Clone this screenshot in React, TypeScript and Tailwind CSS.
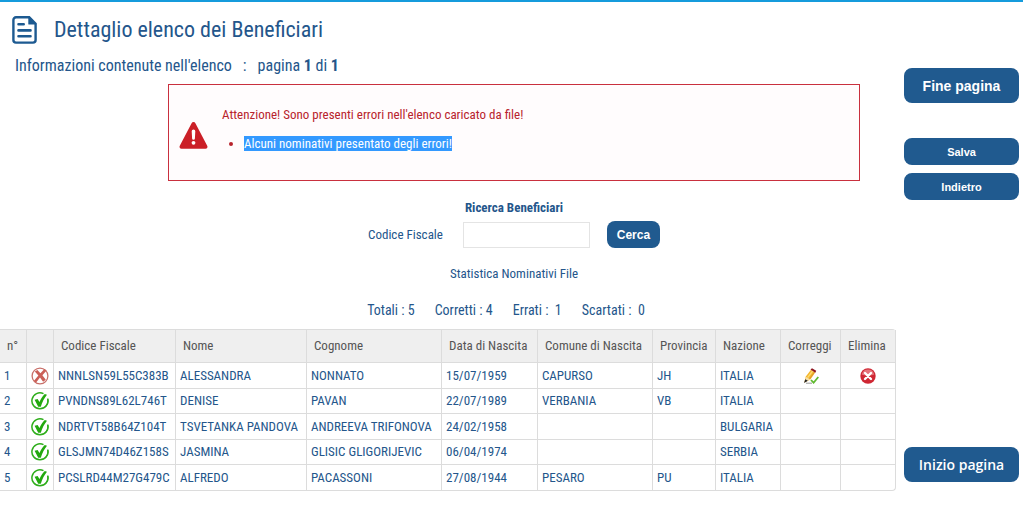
import React from 'react';

interface Beneficiario {
  codiceFiscale: string;
  nome: string;
  cognome: string;
  dataNascita: string;
  comune: string;
  provincia: string;
  nazione: string;
  valido: boolean;
}

const beneficiari: Beneficiario[] = [
  { codiceFiscale: 'NNNLSN59L55C383B', nome: 'ALESSANDRA', cognome: 'NONNATO', dataNascita: '15/07/1959', comune: 'CAPURSO', provincia: 'JH', nazione: 'ITALIA', valido: false },
  { codiceFiscale: 'PVNDNS89L62L746T', nome: 'DENISE', cognome: 'PAVAN', dataNascita: '22/07/1989', comune: 'VERBANIA', provincia: 'VB', nazione: 'ITALIA', valido: true },
  { codiceFiscale: 'NDRTVT58B64Z104T', nome: 'TSVETANKA PANDOVA', cognome: 'ANDREEVA TRIFONOVA', dataNascita: '24/02/1958', comune: '', provincia: '', nazione: 'BULGARIA', valido: true },
  { codiceFiscale: 'GLSJMN74D46Z158S', nome: 'JASMINA', cognome: 'GLISIC GLIGORIJEVIC', dataNascita: '06/04/1974', comune: '', provincia: '', nazione: 'SERBIA', valido: true },
  { codiceFiscale: 'PCSLRD44M27G479C', nome: 'ALFREDO', cognome: 'PACASSONI', dataNascita: '27/08/1944', comune: 'PESARO', provincia: 'PU', nazione: 'ITALIA', valido: true },
];

const headers = ['n°', '', 'Codice Fiscale', 'Nome', 'Cognome', 'Data di Nascita', 'Comune di Nascita', 'Provincia', 'Nazione', 'Correggi', 'Elimina'];

const DocumentIcon = () => (
  <svg width="26" height="28" viewBox="0 0 26 28" fill="none" stroke="#1d5a91" aria-hidden="true">
    <path d="M4 1.3h13.2l6.4 6.4V24a2.6 2.6 0 0 1-2.6 2.6H4A2.6 2.6 0 0 1 1.4 24V3.9A2.6 2.6 0 0 1 4 1.3Z" strokeWidth="2.4" />
    <path d="M17 1.5v6.4h6.5Z" fill="#1d5a91" strokeWidth="1.4" strokeLinejoin="round" />
    <path d="M6.5 8.2h5.2M6.5 14.4h12M6.5 20.2h12" strokeWidth="2.6" strokeLinecap="round" />
  </svg>
);

const WarningIcon = () => (
  <svg className="mt-3" width="29" height="27" viewBox="0 0 29 27" aria-hidden="true">
    <path d="M12.6 1.3a2.1 2.1 0 0 1 3.8 0L28.2 23.8c.8 1.5-.1 2.9-1.7 2.9h-24c-1.6 0-2.5-1.4-1.7-2.9Z" fill="#cb1f27" />
    <path d="M12.7 9.2a1.8 1.8 0 0 1 3.6 0l-.4 7.2a1.4 1.4 0 0 1-2.8 0Z" fill="#fff" />
    <circle cx="14.5" cy="20.8" r="1.9" fill="#fff" />
  </svg>
);

const ValidIcon = () => (
  <svg width="18" height="18" viewBox="0 0 18 18" fill="none" role="img" aria-label="Corretto">
    <path d="M12.5 1.7A8 8 0 1 0 16.7 7" stroke="#2fae1c" strokeWidth="1.5" />
    <path d="M16.6 6.5a8 8 0 0 1-2.2 8.4" stroke="#2fae1c" strokeWidth="1.2" />
    <path d="M3.6 7.8l3-.8 1.9 3C9.8 7 11.4 4.3 13.8 2l2.2.8c-2.8 3.5-4.8 7.4-6.2 11.9H7.2Z" fill="#22a80e" />
  </svg>
);

const InvalidIcon = () => (
  <svg width="18" height="18" viewBox="0 0 18 18" fill="none" role="img" aria-label="Errato">
    <circle cx="9" cy="9" r="7.9" stroke="#c8706a" strokeWidth="1.3" />
    <path d="M3.8 4.6 6.4 3l3 3.3 4-4.2 2.2 1.3-4.2 4.9 3.4 4.4-2.7 2-3.1-4.1-3.9 5-2.3-1.6 4.6-5.4Z" fill="#cb5f57" />
  </svg>
);

const PencilIcon = () => (
  <svg width="16" height="16" viewBox="0 0 16 16" aria-hidden="true">
    <path d="M2.8 8.5 8 1.8l4.2 2.6-4.8 7L1.3 14.6Z" fill="#f5b52c" />
    <path d="M4.6 9.6 9.7 2.9" stroke="#fbdc74" strokeWidth="1.4" />
    <path d="M6.5 11 11.4 4.2" stroke="#d99a2c" strokeWidth="1" />
    <path d="M2.8 8.7l4.5 2.7-5.4 3Z" fill="#f6dfa8" />
    <path d="M7.5 1.4 9 .2l4.2 2.5-.8 2.1Z" fill="#8d1620" />
    <path d="M2.3 11.2l2.6 1.6L1 15Z" fill="#222" />
    <path d="M8 12l2.6 2.7L15.3 9" stroke="#5fb92f" strokeWidth="1.8" fill="none" />
    <path d="M3 15.2h6" stroke="#999" strokeWidth="1" />
  </svg>
);

const DeleteIcon = () => (
  <svg width="16" height="16" viewBox="0 0 16 16" aria-hidden="true">
    <circle cx="8" cy="8" r="7.7" fill="#cf2733" />
    <path d="M1.8 6.6a6.3 6.3 0 0 1 12.4 0c-3 1.5-9 1.5-12.4 0Z" fill="#e5737b" />
    <path d="M5 5l6 6M11 5l-6 6" stroke="#fff" strokeWidth="2.4" strokeLinecap="round" />
  </svg>
);

const cell = 'border-r border-b border-[#dcdcdc] px-1 py-0 whitespace-nowrap';

const App: React.FC = () => {
  return (
    <div className="border-t-2 border-[#159bdc] bg-white font-['Roboto_Condensed','Open_Sans_Condensed',Lato,sans-serif] text-[13px] leading-4 text-[#24568b]">
      <div className="flex">
        <main className="min-w-0 flex-1">
          <header className="flex items-center gap-4 pt-[14px] pl-3">
            <DocumentIcon />
            <h1 className="text-[22px] leading-7">Dettaglio elenco dei Beneficiari</h1>
          </header>
          <p className="mt-3 pl-[15px] text-base leading-5 whitespace-pre">
            Informazioni contenute nell'elenco{'   :   '}pagina <b>1</b> di <b>1</b>
          </p>

          {/* Errori */}
          <section className="mt-2 mr-9 ml-[168px] flex items-center gap-[14px] border border-[#c9303e] bg-[#fffcfd] px-[10px] pt-5 pb-[26px] text-[#b8232c]">
            <WarningIcon />
            <div className="leading-5">
              <p>Attenzione! Sono presenti errori nell'elenco caricato da file!</p>
              <ul className="mt-[9px] list-disc pl-[22px]">
                <li>
                  <span className="bg-[#3399ff] text-white">Alcuni nominativi presentato degli errori!</span>
                </li>
              </ul>
            </div>
          </section>

          {/* Ricerca */}
          <form className="mt-[19px] flex flex-col items-center pl-[132px]" onSubmit={(e) => e.preventDefault()}>
            <h2 className="font-bold">Ricerca Beneficiari</h2>
            <div className="mt-[5px] flex items-center">
              <label htmlFor="cf">Codice Fiscale</label>
              <input id="cf" type="text" className="ml-5 h-[26px] w-[127px] border border-[#e4e4e4] px-1" />
              <button type="submit" className="ml-[17px] h-[27px] w-[53px] rounded-lg bg-[#205a8f] font-['Liberation_Sans',sans-serif] text-xs font-bold text-white">
                Cerca
              </button>
            </div>
          </form>

          {/* Statistica */}
          <section className="mt-[18px] flex flex-col items-center pl-[132px]">
            <h2>Statistica Nominativi File</h2>
            <div className="mt-5 mr-4 flex gap-5 text-sm leading-4 whitespace-pre">
              <span>Totali : 5</span>
              <span>Corretti : 4</span>
              <span>Errati :  1</span>
              <span>Scartati :  0</span>
            </div>
          </section>

          <table className="mt-[11px] w-full table-fixed border-separate border-spacing-0 rounded-r border-t border-[#dcdcdc]">
            <colgroup>
              <col className="w-[27px]" />
              <col className="w-[27px]" />
              <col className="w-[122px]" />
              <col className="w-[131px]" />
              <col className="w-[135px]" />
              <col className="w-[96px]" />
              <col className="w-[115px]" />
              <col className="w-[63px]" />
              <col className="w-[65px]" />
              <col className="w-[60px]" />
              <col className="w-[55px]" />
            </colgroup>
            <thead>
              <tr className="h-[33px] bg-[#efefef] text-left text-[#555]">
                {headers.map((h, i) => (
                  <th key={i} className="border-r border-b border-[#dcdcdc] px-[7px] font-normal whitespace-nowrap">{h}</th>
                ))}
              </tr>
            </thead>
            <tbody>
              {beneficiari.map((b, i) => (
                <tr key={b.codiceFiscale} className="odd:h-[26px] even:h-[25px] last:[&>td:last-child]:rounded-br">
                  <td className={cell}>{i + 1}</td>
                  <td className={cell}>{b.valido ? <ValidIcon /> : <InvalidIcon />}</td>
                  <td className={cell}>{b.codiceFiscale}</td>
                  <td className={cell}>{b.nome}</td>
                  <td className={cell}>{b.cognome}</td>
                  <td className={cell}>{b.dataNascita}</td>
                  <td className={cell}>{b.comune}</td>
                  <td className={cell}>{b.provincia}</td>
                  <td className={cell}>{b.nazione}</td>
                  <td className={cell}>
                    {!b.valido && <button type="button" aria-label="Correggi" className="mx-auto block"><PencilIcon /></button>}
                  </td>
                  <td className={cell}>
                    {!b.valido && <button type="button" aria-label="Elimina" className="mx-auto block"><DeleteIcon /></button>}
                  </td>
                </tr>
              ))}
            </tbody>
          </table>
        </main>

        <aside className="flex w-[127px] shrink-0 flex-col pt-[66px] pr-1 pl-2 font-['Liberation_Sans',sans-serif] font-bold text-white">
          <button type="button" className="h-[35px] rounded-lg bg-[#205a8f] text-sm">Fine pagina</button>
          <button type="button" className="mt-[35px] h-[27px] rounded-lg bg-[#205a8f] text-[11px]">Salva</button>
          <button type="button" className="mt-2 h-[27px] rounded-lg bg-[#205a8f] text-[11px]">Indietro</button>
          <button type="button" className="mt-auto mb-[9px] h-[35px] rounded-lg bg-[#205a8f] font-['Open_Sans',sans-serif] text-sm font-semibold">Inizio pagina</button>
        </aside>
      </div>
    </div>
  );
};

export default App;
